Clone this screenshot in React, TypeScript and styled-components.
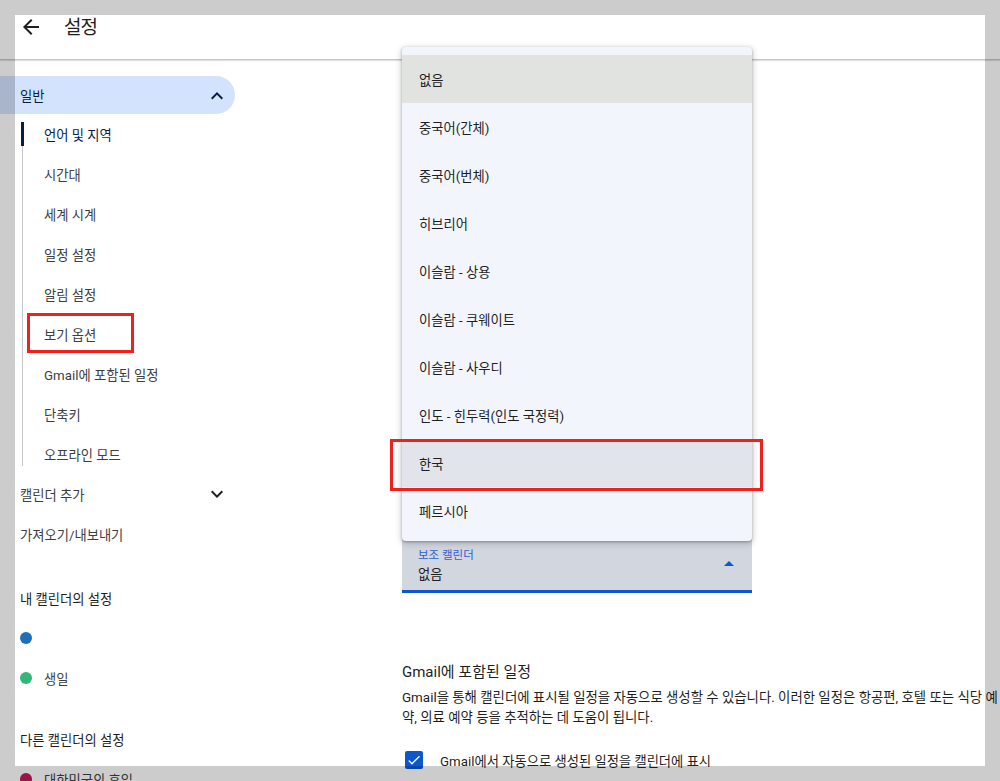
import React from "react";
import styled, { createGlobalStyle } from "styled-components";

const GlobalStyle = createGlobalStyle`
  html, body {
    margin: 0;
    padding: 0;
    background: #ffffff;
    overflow: hidden;
  }
  body {
    font-family: Roboto, "Noto Sans CJK KR", sans-serif;
    color: #1f1f1f;
    -webkit-font-smoothing: antialiased;
  }
  * { box-sizing: border-box; }
`;

const Page = styled.div`
  position: relative;
  height: 781px;
  overflow: hidden;
  display: flex;
  flex-direction: column;
`;

const Frame = styled.div`
  position: fixed;
  inset: 0;
  border: 15px solid rgba(0, 0, 0, 0.2);
  pointer-events: none;
  z-index: 20;
`;

const Header = styled.header`
  height: 60px;
  flex: none;
  display: flex;
  align-items: center;
  padding: 0 0 6px 19px;
  border-bottom: 1px solid #c4c7c5;
  box-shadow: 0 1px 1px rgba(0, 0, 0, 0.12);
`;

const IconButton = styled.button`
  width: 24px;
  height: 24px;
  padding: 0;
  border: 0;
  background: none;
  color: #1f1f1f;
  display: flex;
  align-items: center;
  justify-content: center;
`;

const Title = styled.h1`
  margin: 2px 0 0 21px;
  font-size: 19px;
  font-weight: 400;
  letter-spacing: -1px;
  line-height: 24px;
  color: #1f1f1f;
`;

const Body = styled.div`
  flex: 1;
  display: flex;
  align-items: flex-start;
  min-height: 0;
`;

const Sidebar = styled.nav`
  width: 256px;
  flex: none;
  padding-top: 16px;
`;

const Pill = styled.div`
  width: 235px;
  height: 38px;
  border-radius: 0 20px 20px 0;
  background: #d3e3fd;
  color: #041e49;
  display: flex;
  align-items: center;
  justify-content: space-between;
  padding: 1px 6px 0 20px;
  font-size: 13.3px;
`;

const SubList = styled.ul`
  position: relative;
  list-style: none;
  margin: 0 0 0 22px;
  padding: 0;
  &::before {
    content: "";
    position: absolute;
    left: 0;
    top: 8px;
    bottom: 8px;
    width: 1px;
    background: #c4c7c5;
  }
`;

const SubItem = styled.li<{ $active?: boolean }>`
  position: relative;
  height: 40px;
  display: flex;
  align-items: center;
  padding-left: 22px;
  font-size: 13.3px;
  color: ${(p) => (p.$active ? "#041e49" : "#3c4043")};
  &::before {
    content: "";
    display: ${(p) => (p.$active ? "block" : "none")};
    position: absolute;
    left: -1px;
    top: 8px;
    width: 3px;
    height: 24px;
    background: #041e49;
  }
`;

const Annotation = styled.span<{ $left: number; $right: number; $top: number; $bottom: number }>`
  position: absolute;
  left: ${(p) => p.$left}px;
  right: ${(p) => p.$right}px;
  top: ${(p) => p.$top}px;
  bottom: ${(p) => p.$bottom}px;
  border: 3px solid #f0201c;
  pointer-events: none;
  z-index: 5;
`;

const NavRow = styled.div`
  height: 40px;
  width: 235px;
  display: flex;
  align-items: center;
  justify-content: space-between;
  padding: 0 6px 0 20px;
  font-size: 13.3px;
  color: #3c4043;
`;

const NavHeading = styled.div<{ $gap: number }>`
  height: 40px;
  margin-top: ${(p) => p.$gap}px;
  display: flex;
  align-items: center;
  padding-left: 20px;
  font-size: 13.3px;
  color: #1f1f1f;
`;

const CalendarRow = styled.div`
  height: 40px;
  display: flex;
  align-items: center;
  gap: 12px;
  padding-left: 20px;
  font-size: 13.3px;
  color: #3c4043;
`;

const Dot = styled.span<{ $color: string }>`
  width: 12px;
  height: 12px;
  border-radius: 50%;
  background: ${(p) => p.$color};
  flex: none;
`;

const Main = styled.main`
  flex: 1;
  padding-left: 146px;
`;

const FieldStack = styled.section`
  padding-top: 477px;
  width: 350px;
`;

const FieldWrap = styled.div`
  position: relative;
`;

const Filled = styled.div<{ $focused?: boolean }>`
  height: 56px;
  display: flex;
  align-items: center;
  padding: 0 11px 0 16px;
  border-radius: 4px 4px 0 0;
  background: ${(p) => (p.$focused ? "#d2d6df" : "#e9eef6")};
  border-bottom: ${(p) => (p.$focused ? "3px solid #0b57d0" : "1px solid #747775")};
`;

const FieldText = styled.div`
  flex: 1;
  display: flex;
  flex-direction: column;
  gap: 2px;
  padding-top: 5px;
`;

const FieldLabel = styled.span<{ $focused?: boolean }>`
  font-size: 11.5px;
  line-height: 16px;
  color: ${(p) => (p.$focused ? "#2f5fd3" : "#444746")};
`;

const FieldValue = styled.span`
  font-size: 13.3px;
  line-height: 20px;
  color: #1f1f1f;
`;

const Menu = styled.ul`
  position: absolute;
  left: 0;
  right: 0;
  bottom: calc(100% - 4px);
  margin: 0;
  padding: 8px 0 6px;
  list-style: none;
  background: #f2f6fc;
  border-radius: 4px;
  box-shadow: 0 1px 3px rgba(0, 0, 0, 0.3), 0 2px 6px 2px rgba(0, 0, 0, 0.12);
  z-index: 4;
`;

const MenuItem = styled.li<{ $tone?: "selected" | "hover" }>`
  position: relative;
  height: 48px;
  display: flex;
  align-items: center;
  padding-left: 17px;
  font-size: 13.3px;
  color: #1f1f1f;
  background: ${(p) =>
    p.$tone === "selected" ? "#e1e3e1" : p.$tone === "hover" ? "#e1e4ea" : "transparent"};
`;

const GmailSection = styled.section`
  margin-top: 67px;
  width: 620px;
`;

const SectionTitle = styled.h2`
  margin: 0;
  font-size: 15px;
  line-height: 24px;
  font-weight: 400;
  color: #1f1f1f;
`;

const Description = styled.p`
  margin: 4px 0 0;
  max-width: 600px;
  font-size: 13.4px;
  line-height: 20px;
  color: #1f1f1f;
`;

const CheckRow = styled.label`
  margin-top: 12px;
  height: 40px;
  display: flex;
  align-items: center;
  padding-left: 3px;
  font-size: 13.3px;
  color: #1f1f1f;
`;

const CheckBox = styled.span`
  width: 18px;
  height: 18px;
  border-radius: 2px;
  background: #0b57d0;
  display: flex;
  align-items: center;
  justify-content: center;
  margin-right: 17px;
  flex: none;
`;

const ArrowBack = () => (
  <svg width="24" height="24" viewBox="0 0 24 24" fill="currentColor">
    <path d="M20 11H7.83l5.59-5.59L12 4l-8 8 8 8 1.41-1.41L7.83 13H20v-2z" />
  </svg>
);

const ChevronUp = () => (
  <svg width="24" height="24" viewBox="0 0 24 24" fill="#041e49">
    <path d="M12 8l-6 6 1.41 1.41L12 10.83l4.59 4.58L18 14z" />
  </svg>
);

const ChevronDown = () => (
  <svg width="24" height="24" viewBox="0 0 24 24" fill="#1f1f1f">
    <path d="M16.59 8.59L12 13.17 7.41 8.59 6 10l6 6 6-6z" />
  </svg>
);

const DropUp = () => (
  <svg width="24" height="24" viewBox="0 0 24 24" fill="#0b57d0">
    <path d="M7 14l5-5 5 5z" />
  </svg>
);

const Check = () => (
  <svg width="16" height="16" viewBox="0 0 24 24" fill="#ffffff">
    <path d="M9 16.17L4.83 12l-1.42 1.41L9 19 21 7l-1.41-1.41z" />
  </svg>
);

const subItems = [
  "언어 및 지역",
  "시간대",
  "세계 시계",
  "일정 설정",
  "알림 설정",
  "보기 옵션",
  "Gmail에 포함된 일정",
  "단축키",
  "오프라인 모드",
];

const calendars = [
  "없음",
  "중국어(간체)",
  "중국어(번체)",
  "히브리어",
  "이슬람 - 상용",
  "이슬람 - 쿠웨이트",
  "이슬람 - 사우디",
  "인도 - 힌두력(인도 국정력)",
  "한국",
  "페르시아",
];

export default function App() {
  return (
    <Page>
      <GlobalStyle />
      <Header>
        <IconButton aria-label="뒤로">
          <ArrowBack />
        </IconButton>
        <Title>설정</Title>
      </Header>
      <Body>
        <Sidebar>
          <Pill>
            <span>일반</span>
            <ChevronUp />
          </Pill>
          <SubList>
            {subItems.map((item, i) => (
              <SubItem key={item} $active={i === 0}>
                {item}
                {item === "보기 옵션" && (
                  <Annotation $left={5} $right={122} $top={-1} $bottom={1} />
                )}
              </SubItem>
            ))}
          </SubList>
          <NavRow>
            <span>캘린더 추가</span>
            <ChevronDown />
          </NavRow>
          <NavRow>가져오기/내보내기</NavRow>
          <NavHeading $gap={24}>내 캘린더의 설정</NavHeading>
          <CalendarRow>
            <Dot $color="#1d6fb8" />
          </CalendarRow>
          <CalendarRow>
            <Dot $color="#33b679" />
            생일
          </CalendarRow>
          <NavHeading $gap={21}>다른 캘린더의 설정</NavHeading>
          <CalendarRow>
            <Dot $color="#c2185b" />
            대한민국의 휴일
          </CalendarRow>
        </Sidebar>
        <Main>
          <FieldStack>
            <FieldWrap>
              <Menu role="listbox">
                {calendars.map((c) => (
                  <MenuItem
                    key={c}
                    $tone={c === "없음" ? "selected" : c === "한국" ? "hover" : undefined}
                  >
                    {c}
                    {c === "한국" && (
                      <Annotation $left={-12} $right={-11} $top={0} $bottom={-4} />
                    )}
                  </MenuItem>
                ))}
              </Menu>
              <Filled $focused>
                <FieldText>
                  <FieldLabel $focused>보조 캘린더</FieldLabel>
                  <FieldValue>없음</FieldValue>
                </FieldText>
                <DropUp />
              </Filled>
            </FieldWrap>
          </FieldStack>
          <GmailSection>
            <SectionTitle>Gmail에 포함된 일정</SectionTitle>
            <Description>
              Gmail을 통해 캘린더에 표시될 일정을 자동으로 생성할 수 있습니다. 이러한 일정은 항공편, 호텔
              또는 식당 예약, 의료 예약 등을 추적하는 데 도움이 됩니다.
            </Description>
            <CheckRow>
              <CheckBox>
                <Check />
              </CheckBox>
              Gmail에서 자동으로 생성된 일정을 캘린더에 표시
            </CheckRow>
          </GmailSection>
        </Main>
      </Body>
      <Frame />
    </Page>
  );
}
